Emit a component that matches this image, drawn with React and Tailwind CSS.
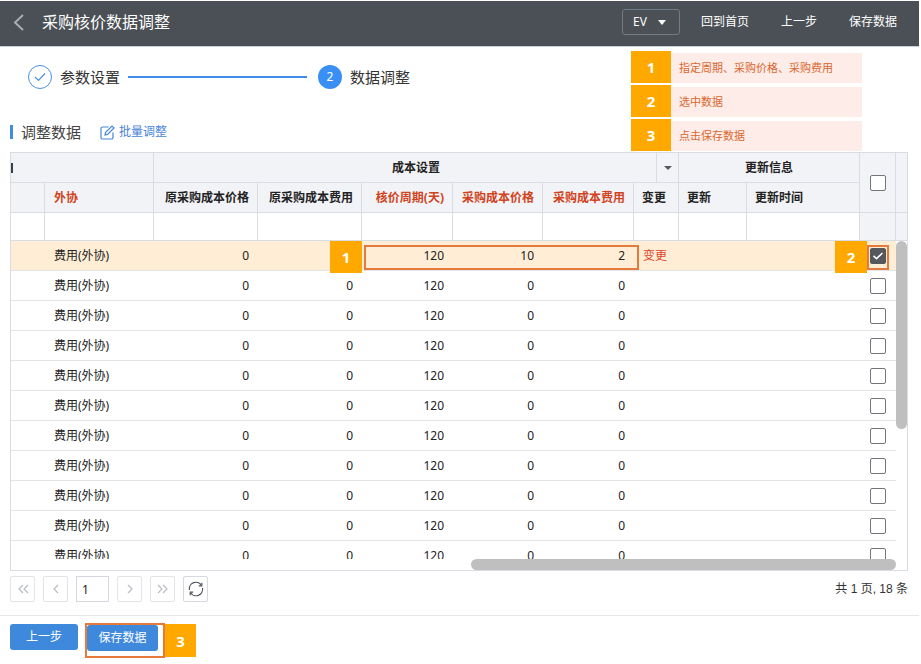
import { useState } from "react";
import clsx from "clsx";

const rows = Array.from({ length: 11 }, (_, i) => ({
  id: i + 1,
  type: "费用(外协)",
  oldPrice: 0,
  oldFee: 0,
  cycle: 120,
  price: i === 0 ? 10 : 0,
  fee: i === 0 ? 2 : 0,
}));

const hints = ["指定周期、采购价格、采购费用", "选中数据", "点击保存数据"];

const headCell = "h-[30px] border-r border-b border-[#d9dce3] bg-[#f2f3f7] px-2 font-bold whitespace-nowrap";
const filterCell = "h-7 border-r border-b border-[#d9dce3] bg-white";
const bodyCell = "h-[30px] border-b border-[#e3e4e8] pl-[9px] pr-[9px] whitespace-nowrap";

function Badge({ className, children }) {
  return (
    <span className={clsx("flex items-center justify-center bg-[#ffa800] text-[15px] font-bold text-white", className)}>
      {children}
    </span>
  );
}

function Checkbox({ label, checked, onChange }) {
  return (
    <span className="inline-grid size-4 align-middle">
      <input
        type="checkbox"
        aria-label={label}
        checked={checked}
        onChange={onChange}
        className="peer col-start-1 row-start-1 size-4 appearance-none rounded-xs border border-[#73767c] bg-white checked:border-[#55585d] checked:bg-[#55585d]"
      />
      <svg viewBox="0 0 16 16" className="pointer-events-none col-start-1 row-start-1 hidden size-4 peer-checked:block" fill="none" stroke="#fff" strokeWidth="1.6">
        <path d="M3.5 7.8l3 2.8 6-5.6" />
      </svg>
    </span>
  );
}

function PageButton({ label, children, className = "border-[#e2e4e8] text-[#b9bcc2]" }) {
  return (
    <button type="button" aria-label={label} className={clsx("flex h-[26px] w-[25px] items-center justify-center rounded-xs border bg-white", className)}>
      <svg viewBox="0 0 16 16" className="size-4" fill="none" stroke="currentColor" strokeWidth="1.2">
        {children}
      </svg>
    </button>
  );
}

function Header() {
  return (
    <header className="mt-px flex h-[46px] items-center border-b border-[#c9d2da] bg-[#4a5055] pr-[22px] pb-1 pl-3 text-white">
      <button type="button" aria-label="返回" className="flex w-[30px]">
        <svg viewBox="0 0 14 20" className="h-5 w-3.5" fill="none" stroke="#a9adb1" strokeWidth="2">
          <path d="M11 3L3 10.500l8 7.500" />
        </svg>
      </button>
      <h1 className="text-base">采购核价数据调整</h1>
      <div className="relative mr-[21px] ml-auto">
        <select aria-label="EV" className="block h-[26px] w-[58px] appearance-none rounded-[3px] border border-[#6f7b86] bg-transparent pl-2.5 text-xs">
          <option>EV</option>
        </select>
        <svg viewBox="0 0 8 5" className="pointer-events-none absolute top-[11px] right-3.5 h-[5px] w-2" fill="#fff">
          <path d="M0 0h8L4 5z" />
        </svg>
      </div>
      <nav className="flex gap-8 text-xs">
        <a href="#home">回到首页</a>
        <a href="#prev">上一步</a>
        <a href="#save">保存数据</a>
      </nav>
    </header>
  );
}

function Intro() {
  return (
    <section className="flex justify-between pr-[57px] pl-2.5">
      <div>
        <ol className="flex h-[60px] items-center pl-[18px] text-[15px] text-[#333]">
          <li className="flex items-center gap-2">
            <span className="flex size-6 items-center justify-center rounded-full border border-[#4a8fe0]">
              <svg viewBox="0 0 12 10" className="h-2.5 w-3" fill="none" stroke="#4a8fe0" strokeWidth="1.2">
                <path d="M1 5l3.500 3.500L11 1.500" />
              </svg>
            </span>
            参数设置
          </li>
          <li aria-hidden="true" className="mr-[11px] ml-2 h-0.5 w-[179px] bg-[#408be6]" />
          <li className="flex items-center gap-2">
            <span className="flex size-6 items-center justify-center rounded-full bg-[#3a8ff5] text-xs text-white">2</span>
            数据调整
          </li>
        </ol>
        <div className="flex h-[45px] items-center pt-[5px]">
          <span className="h-3.5 w-[3px] bg-[#408be6]" />
          <h2 className="ml-2 text-[15px] text-[#444]">调整数据</h2>
          <button type="button" className="ml-[19px] flex items-center gap-1 text-xs text-[#4a85d8]">
            <svg viewBox="0 0 15 15" className="size-[15px]" fill="none" stroke="currentColor" strokeWidth="1.200">
              <path d="M8.500 2H2.500a1.500 1.500 0 0 0-1.500 1.500v9A1.500 1.500 0 0 0 2.500 14h9a1.500 1.500 0 0 0 1.500-1.500V7.500" />
              <path d="M5 10l.6-2.600 6.400-6.400 2 2-6.400 6.400z" />
            </svg>
            批量调整
          </button>
        </div>
      </div>
      <ol className="flex flex-col gap-0.5 pt-1 text-[11px] text-[#d9682f]">
        {hints.map((hint, i) => (
          <li key={hint} className="flex items-end">
            <Badge className="h-8 w-10">{i + 1}</Badge>
            <span className="flex h-[30px] w-[191px] items-center bg-[#feece8] pl-2">{hint}</span>
          </li>
        ))}
      </ol>
    </section>
  );
}

function DataTable() {
  const [selected, setSelected] = useState([1]);
  const toggle = (id) =>
    setSelected((s) => (s.includes(id) ? s.filter((x) => x !== id) : [...s, id]));

  return (
    <div className="border border-[#d9dce3]">
      <div className="h-[406px] overflow-hidden">
        <table className="w-full table-fixed border-separate border-spacing-0 text-xs text-[#222]">
          <colgroup>
            <col className="w-[34px]" />
            <col className="w-[109px]" />
            <col className="w-[104px]" />
            <col className="w-[104px]" />
            <col className="w-[91px]" />
            <col className="w-[90px]" />
            <col className="w-[91px]" />
            <col className="w-[45px]" />
            <col className="w-[68px]" />
            <col className="w-[113px]" />
            <col className="w-9" />
            <col className="w-[11px]" />
          </colgroup>
          <thead>
            <tr>
              <th colSpan={2} className="h-[30px] border-r border-b border-[#d9dce3] bg-[#f2f3f7] p-0">
                <span className="block h-2.5 w-0.5 bg-[#3a3c4a]" />
              </th>
              <th colSpan={6} className={clsx(headCell, "relative")}>
                成本设置
                <button type="button" aria-label="列菜单" className="absolute inset-y-0 right-0 flex w-[22px] items-center justify-center border-l border-[#d9dce3]">
                  <svg viewBox="0 0 8 4" className="h-1 w-2" fill="#55585d">
                    <path d="M0 0h8L4 4z" />
                  </svg>
                </button>
              </th>
              <th colSpan={2} className={headCell}>更新信息</th>
              <th rowSpan={2} className={clsx(headCell, "text-center")}>
                <Checkbox
                  label="全选"
                  checked={selected.length === rows.length}
                  onChange={(e) => setSelected(e.target.checked ? rows.map((r) => r.id) : [])}
                />
              </th>
              <th rowSpan={2} className="border-b border-[#d9dce3] bg-[#f2f3f7] p-0" />
            </tr>
            <tr>
              <th className={headCell} />
              <th className={clsx(headCell, "text-left text-[#d0431c]")}>
                <span className="pl-px">外协</span>
              </th>
              <th className={clsx(headCell, "text-right")}>原采购成本价格</th>
              <th className={clsx(headCell, "text-right")}>原采购成本费用</th>
              <th className={clsx(headCell, "text-right text-[#d0431c]")}>核价周期(天)</th>
              <th className={clsx(headCell, "text-right text-[#d0431c]")}>采购成本价格</th>
              <th className={clsx(headCell, "text-right text-[#d0431c]")}>采购成本费用</th>
              <th className={clsx(headCell, "text-left")}>变更</th>
              <th className={clsx(headCell, "text-left")}>更新</th>
              <th className={clsx(headCell, "text-left")}>更新时间</th>
            </tr>
            <tr>
              {Array.from({ length: 10 }, (_, i) => (
                <td key={i} className={filterCell} />
              ))}
              <td className="border-r border-b border-[#d9dce3] bg-[#f2f3f7]" />
              <td className="border-b border-[#d9dce3] bg-[#f2f3f7]" />
            </tr>
          </thead>
          <tbody>
            {rows.map((row, i) => {
              const first = i === 0;
              const cell = clsx(bodyCell, selected.includes(row.id) && "bg-[#ffeed5]");
              return (
                <tr key={row.id}>
                  <td className={cell} />
                  <td className={cell}>{row.type}</td>
                  <td className={clsx(cell, "text-right")}>{row.oldPrice}</td>
                  <td className={clsx(cell, "text-right")}>{first ? "" : row.oldFee}</td>
                  <td className={clsx(cell, "relative text-right")}>
                    {row.cycle}
                    {first && (
                      <>
                        <Badge className="absolute top-0 right-full z-10 size-8">1</Badge>
                        <span className="pointer-events-none absolute top-1 left-0.5 z-10 h-[25px] w-[302%] border-2 border-[#e67a3c]" />
                      </>
                    )}
                  </td>
                  <td className={clsx(cell, "text-right")}>{row.price}</td>
                  <td className={clsx(cell, "text-right")}>{row.fee}</td>
                  <td className={cell}>
                    {first && <a href="#change" className="text-[#e0452c]">变更</a>}
                  </td>
                  <td className={cell} />
                  <td className={cell} />
                  <td className={clsx(cell, "relative text-center")}>
                    <Checkbox label={`选择第${row.id}行`} checked={selected.includes(row.id)} onChange={() => toggle(row.id)} />
                    {first && (
                      <>
                        <span className="pointer-events-none absolute inset-x-[7px] top-1 z-10 h-[25px] border-2 border-[#e67a3c]" />
                        <Badge className="absolute top-0 right-[29px] z-10 size-8">2</Badge>
                      </>
                    )}
                  </td>
                  {first && (
                    <td rowSpan={rows.length} className="p-0 align-top">
                      <div className="h-[188px] w-full rounded-full bg-[#bfbfbf]" />
                    </td>
                  )}
                </tr>
              );
            })}
          </tbody>
        </table>
      </div>
      <div className="flex justify-end pr-[11px]">
        <div className="h-[11px] w-[48%] rounded-full bg-[#bfbfbf]" />
      </div>
    </div>
  );
}

function Pager() {
  return (
    <div className="flex items-center justify-between pt-[5px]">
      <div className="flex gap-2">
        <PageButton label="首页">
          <path d="M8 4L4 8l4 4M13 4L9 8l4 4" />
        </PageButton>
        <PageButton label="上一页">
          <path d="M10 4L6 8l4 4" />
        </PageButton>
        <input aria-label="页码" defaultValue="1" className="h-[26px] w-[33px] border border-[#d5d8de] pl-[5px] text-xs text-[#222]" />
        <PageButton label="下一页">
          <path d="M6 4l4 4-4 4" />
        </PageButton>
        <PageButton label="末页">
          <path d="M3 4l4 4-4 4M8 4l4 4-4 4" />
        </PageButton>
        <PageButton label="刷新" className="border-[#d5d8de] text-[#55585d]">
          <path d="M1.500 9A6.500 6.500 0 0 1 13.500 4.500M14.500 7A6.500 6.500 0 0 1 2.500 11.500" />
          <path d="M13.800 1.800v3h-3M2.200 14.200v-3h3" />
        </PageButton>
      </div>
      <p className="font-['Liberation_Sans','Noto_Sans_CJK_SC',sans-serif] text-xs text-[#333]">共 1 页, 18 条</p>
    </div>
  );
}

export default function App() {
  return (
    <div className="flow-root bg-white pr-0.5 font-['Noto_Sans','Noto_Sans_CJK_SC',sans-serif]">
      <Header />
      <Intro />
      <main className="pr-[11px] pl-2.5">
        <DataTable />
        <Pager />
      </main>
      <footer className="mt-[13px] flex items-start gap-[7px] border-t border-[#e6e7ea] pt-[7px] pl-2.5 text-xs text-white">
        <button type="button" className="mt-px h-[26px] w-[68px] rounded-[3px] bg-[#3f89dd]">上一步</button>
        <div className="flex items-center">
          <div className="h-[35px] w-20 border-2 border-[#e67a3c]">
            <button type="button" className="block h-[26px] w-[71px] rounded-[3px] bg-[#3f89dd]">保存数据</button>
          </div>
          <Badge className="h-[33px] w-[31px]">3</Badge>
        </div>
      </footer>
    </div>
  );
}
